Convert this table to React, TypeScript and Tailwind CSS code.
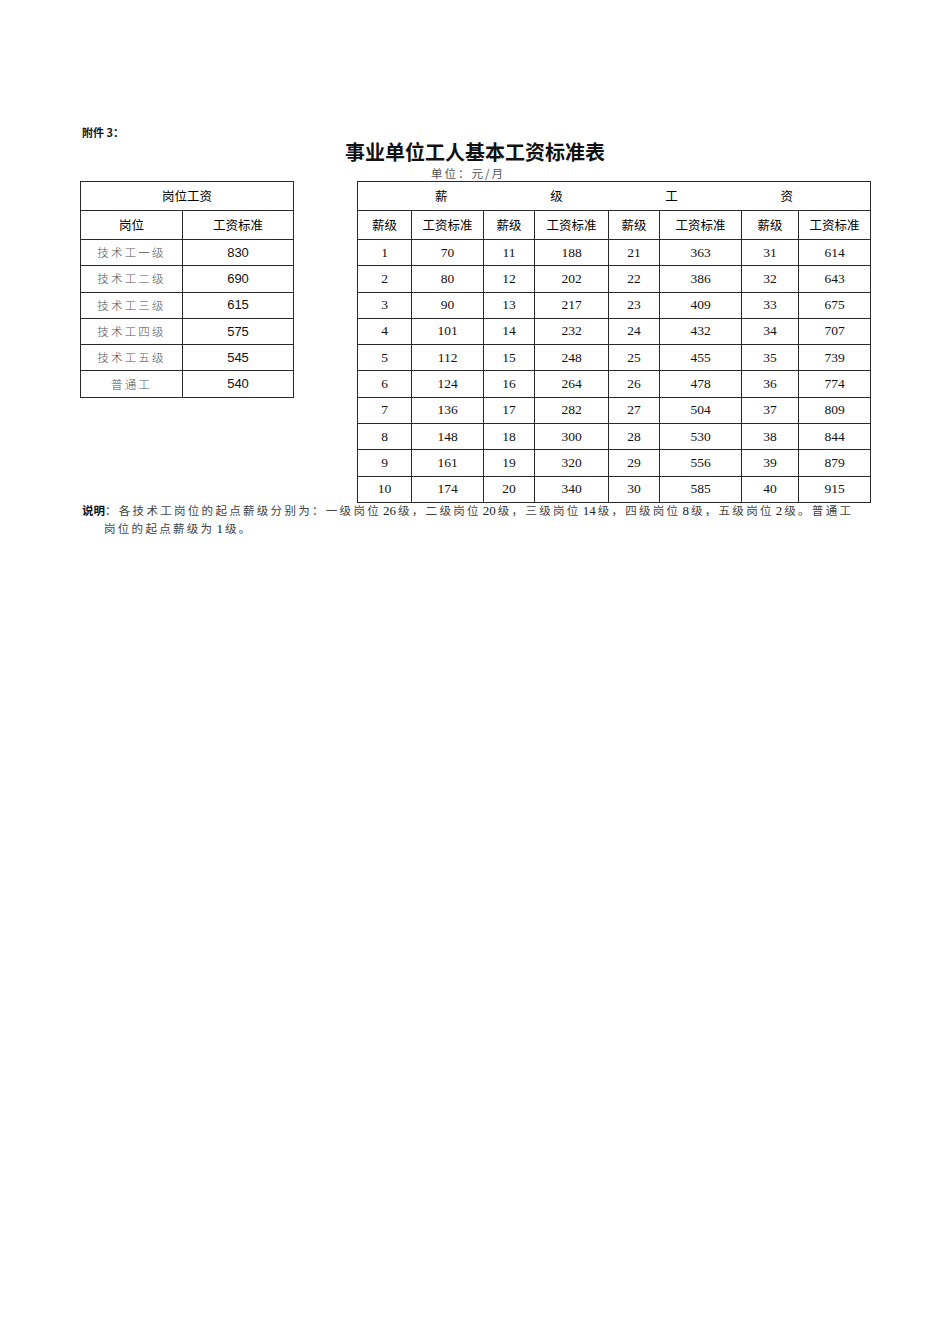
const POSTS = [
  ["技术工一级", "830"],
  ["技术工二级", "690"],
  ["技术工三级", "615"],
  ["技术工四级", "575"],
  ["技术工五级", "545"],
  ["普通工", "540"],
];

const GRADES = [
  70, 80, 90, 101, 112, 124, 136, 148, 161, 174,
  188, 202, 217, 232, 248, 264, 282, 300, 320, 340,
  363, 386, 409, 432, 455, 478, 504, 530, 556, 585,
  614, 643, 675, 707, 739, 774, 809, 844, 879, 915,
];

const CJK = { fontFamily: '"Noto Sans CJK SC", sans-serif' };
const SERIF = { fontFamily: '"Liberation Serif", "Noto Sans CJK SC", serif' };
const SANS = { fontFamily: '"Liberation Sans", "Noto Sans CJK SC", sans-serif' };

const cell = "border border-[#2a2a2a] p-0 text-center align-middle";
const head = `${cell} h-[29px] text-[12.5px] font-normal text-black`;
const data = `${cell} h-[26.3px] text-[13.5px] text-[#111]`;

function N({ v }: { v: string }) {
  return <span className="mx-[2px] text-[13px] tracking-normal text-[#222]">{v}</span>;
}

export default function App() {
  const rows = Array.from({ length: 10 }, (_, i) => i);

  return (
    <div className="w-[950px] min-h-[1344px] bg-white text-black">
      <div className="pl-[82px] pt-[125px]">
        <div className="text-[11px] font-bold leading-[14px] text-[#111]" style={CJK}>
          附件 3：
        </div>
      </div>

      <div className="mt-[1px] text-center text-[20px] font-bold leading-[26px] text-[#111]" style={SERIF}>
        事业单位工人基本工资标准表
      </div>
      <div className="pl-[431px] text-[11.5px] leading-[14px] tracking-[2px] text-[#555]" style={CJK}>
        单位：元/月
      </div>

      <div className="mt-[1px] flex items-start pl-[80px]">
        <table className="w-[213px] table-fixed border-collapse" style={CJK}>
          <colgroup>
            <col className="w-[102px]" />
            <col className="w-[111px]" />
          </colgroup>
          <tbody>
            <tr>
              <td colSpan={2} className={head}>岗位工资</td>
            </tr>
            <tr>
              <td className={head}>岗位</td>
              <td className={head}>工资标准</td>
            </tr>
            {POSTS.map(([name, pay]) => (
              <tr key={name}>
                <td className={`${data} !text-[11.5px] font-light tracking-[2.2px] !text-[#555]`}>{name}</td>
                <td className={`${data} !text-[13px]`} style={SANS}>{pay}</td>
              </tr>
            ))}
          </tbody>
        </table>

        <table className="ml-[63px] w-[513px] table-fixed border-collapse" style={CJK}>
          <colgroup>
            <col className="w-[54px]" />
            <col className="w-[72px]" />
            <col className="w-[51px]" />
            <col className="w-[74px]" />
            <col className="w-[51px]" />
            <col className="w-[82px]" />
            <col className="w-[57px]" />
            <col className="w-[72px]" />
          </colgroup>
          <tbody>
            <tr>
              <td colSpan={8} className={head}>
                <div className="flex justify-between px-[77px]">
                  <span>薪</span>
                  <span>级</span>
                  <span>工</span>
                  <span>资</span>
                </div>
              </td>
            </tr>
            <tr>
              {[0, 1, 2, 3].map((k) => (
                <>
                  <td key={`g${k}`} className={head}>薪级</td>
                  <td key={`s${k}`} className={head}>工资标准</td>
                </>
              ))}
            </tr>
            {rows.map((i) => (
              <tr key={i}>
                {[0, 1, 2, 3].map((k) => (
                  <>
                    <td key={`g${k}`} className={data} style={SERIF}>{k * 10 + i + 1}</td>
                    <td key={`s${k}`} className={data} style={SERIF}>{GRADES[k * 10 + i]}</td>
                  </>
                ))}
              </tr>
            ))}
          </tbody>
        </table>
      </div>

      <div
        className="-mt-[1px] whitespace-nowrap pl-[82px] text-[11.5px] leading-[17px] tracking-[2.3px] text-[#444]"
        style={SERIF}
      >
        <span className="font-bold tracking-normal text-[#111]" style={CJK}>说明</span>：各技术工岗位的起点薪级分别为：一级岗位<N v="26" />级，二级岗位<N v="20" />级，三级岗位<N v="14" />级，四级岗位<N v="8" />级，五级岗位<N v="2" />级。普通工
        <br />
        <span className="pl-[22px]">岗位的起点薪级为<N v="1" />级。</span>
      </div>
    </div>
  );
}
